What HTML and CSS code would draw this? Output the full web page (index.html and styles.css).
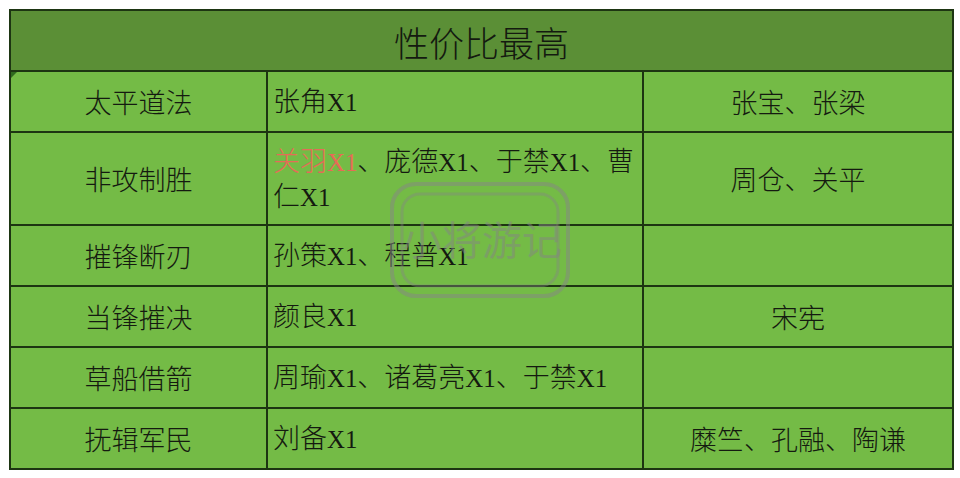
FILE: index.html
```html
<!DOCTYPE html>
<html lang="zh-CN">
<head>
<meta charset="utf-8">
<title>性价比最高</title>
<link rel="stylesheet" href="styles.css">
</head>
<body>
<div class="sheet">
  <table class="grid">
    <colgroup>
      <col class="c1">
      <col class="c2">
      <col class="c3">
    </colgroup>
    <thead>
      <tr class="title-row"><th colspan="3">性价比最高</th></tr>
    </thead>
    <tbody>
      <tr class="row"><td class="name first">太平道法</td><td class="list">张角<span class="x">X1</span></td><td class="extra">张宝、张梁</td></tr>
      <tr class="row tall"><td class="name">非攻制胜</td><td class="list"><span class="red">关羽<span class="x">X1</span></span>、庞德<span class="x">X1</span>、于禁<span class="x">X1</span>、曹仁<span class="x">X1</span></td><td class="extra">周仓、关平</td></tr>
      <tr class="row"><td class="name">摧锋断刃</td><td class="list">孙策<span class="x">X1</span>、程普<span class="x">X1</span></td><td class="extra"></td></tr>
      <tr class="row"><td class="name">当锋摧决</td><td class="list">颜良<span class="x">X1</span></td><td class="extra">宋宪</td></tr>
      <tr class="row"><td class="name">草船借箭</td><td class="list">周瑜<span class="x">X1</span>、诸葛亮<span class="x">X1</span>、于禁<span class="x">X1</span></td><td class="extra"></td></tr>
      <tr class="row"><td class="name">抚辑军民</td><td class="list">刘备<span class="x">X1</span></td><td class="extra">糜竺、孔融、陶谦</td></tr>
    </tbody>
  </table>
  <svg class="watermark" width="190" height="124" viewBox="0 0 190 124" aria-hidden="true">
    <rect x="4" y="3" width="176" height="112" rx="24" fill="none" stroke="#858585" stroke-width="4" opacity="0.5"/>
    <rect x="14" y="13" width="156" height="92" rx="18" fill="none" stroke="#858585" stroke-width="3" opacity="0.4"/>
    <text x="94" y="74" text-anchor="middle" class="wm-text">小将游记</text>
  </svg>
</div>
</body>
</html>
```

FILE: styles.css
```css
html, body {
  margin: 0;
  padding: 0;
  background: #ffffff;
}

.sheet {
  position: relative;
  padding: 9px 0 0 9px;
  width: 960px;
  height: 478px;
  box-sizing: border-box;
}

.grid {
  border-collapse: collapse;
  table-layout: fixed;
  width: 943px;
  font-family: "Noto Sans CJK SC", sans-serif;
  font-weight: 300;
  color: #141a10;
}

.c1 { width: 257px; }
.c2 { width: 376px; }
.c3 { width: 310px; }

.grid th,
.grid td {
  border: 2px solid #1d3512;
  padding: 0;
}

.title-row th {
  height: 57px;
  background: #5b8f36;
  font-size: 35px;
  font-weight: 300;
  text-align: center;
  vertical-align: middle;
  line-height: 40px;
  padding-top: 2px;
}

.row td {
  height: 59px;
  background: #74bb46;
  font-size: 27px;
  line-height: 32px;
  vertical-align: middle;
}

.row.tall td {
  height: 91px;
}

.x {
  font-family: "Liberation Serif", serif;
  font-size: 0.92em;
}

.name {
  text-align: center;
  position: relative;
}

.name.first::before {
  content: "";
  position: absolute;
  left: 0;
  top: 0;
  border-top: 6px solid #2f6a1e;
  border-right: 6px solid transparent;
}

.list {
  text-align: left;
  padding-left: 5px !important;
  padding-right: 2px !important;
}

.extra {
  text-align: center;
}

.red {
  color: #e56b57;
}

.watermark {
  position: absolute;
  left: 388px;
  top: 181px;
  pointer-events: none;
}

.wm-text {
  font-family: "Noto Sans CJK SC", sans-serif;
  font-size: 40px;
  font-weight: 400;
  fill: #858585;
  opacity: 0.5;
}
```
